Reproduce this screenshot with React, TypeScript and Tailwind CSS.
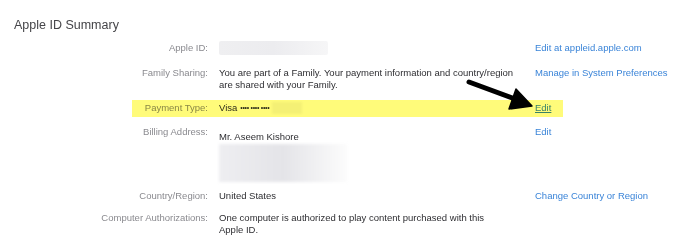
import type { ReactNode } from "react";

const Row = ({
  label,
  link,
  className = "",
  children,
  underline = false,
}: {
  label: string;
  link?: string;
  className?: string;
  children: ReactNode;
  underline?: boolean;
}) => (
  <div className={`flex text-[9.5px] leading-[12px] ${className}`}>
    <div className="w-[208px] shrink-0 text-right text-[#8a8a8f]">{label}</div>
    <div className="ml-[11px] w-[305px] shrink-0 text-[#2e2e32]">{children}</div>
    {link && (
      <a className={`ml-[11px] whitespace-nowrap text-[#3a84d8] ${underline ? "underline underline-offset-1" : ""}`}>
        {link}
      </a>
    )}
  </div>
);

export default function App() {
  return (
    <div className="relative h-[251px] w-[680px] overflow-hidden bg-white font-['Liberation_Sans',Arial,sans-serif]">
      <h1 className="pl-[14px] pt-[16px] text-[12.5px] leading-[18px] text-[#454549]">Apple ID Summary</h1>

      <Row label="Apple ID:" link="Edit at appleid.apple.com" className="mt-[8px]">
        <div className="h-[14px] w-[109px] -translate-y-[1px] rounded-[2px] bg-linear-to-r from-[#efeff1] via-[#ececef] to-[#f6f6f7] blur-[0.6px]" />
      </Row>

      <Row label="Family Sharing:" link="Manage in System Preferences" className="mt-[11px]">
        <p className="whitespace-nowrap">
          You are part of a Family. Your payment information and country/region
          <br />
          are shared with your Family.
        </p>
      </Row>

      {/* highlighted payment row */}
      <div className="relative mt-[11px]">
        <Row label="Payment Type:" link="Edit" underline>
          <div className="flex items-center whitespace-nowrap">
            <span>Visa</span>
            <span className="ml-[3px] text-[7px] tracking-[-0.3px]">•••• •••• ••••</span>
            <span className="ml-[3px] h-[12px] w-[30px] bg-[#f4f4f4] blur-[1px]" />
          </div>
        </Row>
        <div className="pointer-events-none absolute -bottom-[3px] -top-[2px] left-[132px] w-[431px] bg-[#fffb7a] mix-blend-multiply" />
      </div>

      <Row label="Billing Address:" link="Edit" className="mt-[12px]">
        <div className="pt-[5px]">
          <p>Mr. Aseem Kishore</p>
          <div className="mt-px h-[38px] w-[128px] bg-linear-to-r from-[#eeeef1] via-[#e4e4e8] to-[#fcfcfc] blur-[1.5px]" />
        </div>
      </Row>

      <Row label="Country/Region:" link="Change Country or Region" className="mt-[8px]">
        United States
      </Row>

      <Row label="Computer Authorizations:" className="mt-[10px]">
        <p className="whitespace-nowrap">
          One computer is authorized to play content purchased with this
          <br />
          Apple ID.
        </p>
      </Row>

      {/* annotation arrow drawn over the page */}
      <svg className="pointer-events-none absolute left-0 top-0" width="680" height="251" viewBox="0 0 680 251">
        <line x1="469" y1="82" x2="515" y2="99" stroke="#000" strokeWidth="5" strokeLinecap="round" />
        <polygon points="532,106 516,89 509,109" fill="#000" stroke="#000" strokeWidth="1.5" strokeLinejoin="round" />
      </svg>
    </div>
  );
}
